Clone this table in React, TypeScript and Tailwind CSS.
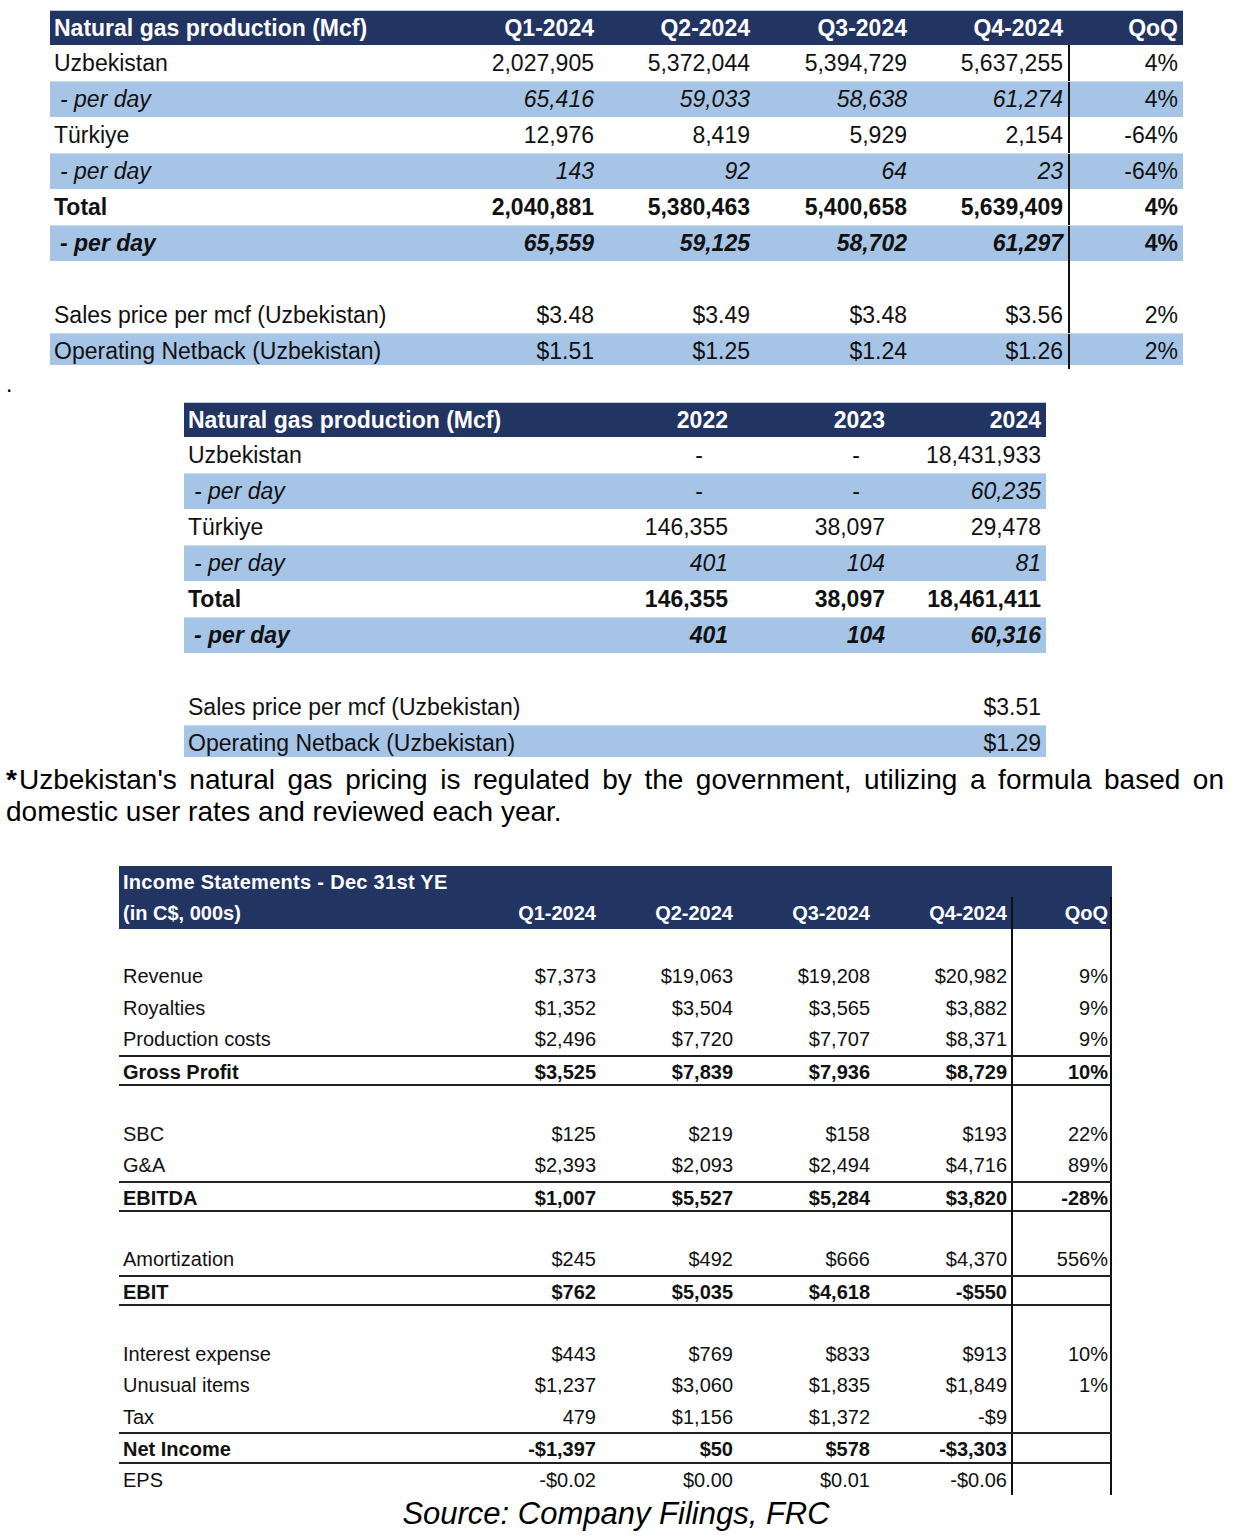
import React from "react";

const FONT = "font-['Liberation_Sans',Arial,Helvetica,sans-serif]";

type Kind = "n" | "i" | "b" | "bi";
type Row = {
  label?: string;
  vals?: string[];
  q?: string;
  blue?: boolean;
  kind?: Kind;
  h: string;
  indent?: boolean;
};

function kindCls(k: Kind | undefined) {
  if (k === "i") return "italic";
  if (k === "b") return "font-bold";
  if (k === "bi") return "font-bold italic";
  return "";
}

function Table1() {
  const rows: Row[] = [
    { label: "Uzbekistan", vals: ["2,027,905", "5,372,044", "5,394,729", "5,637,255"], q: "4%", h: "h-[36px]" },
    { label: "- per day", vals: ["65,416", "59,033", "58,638", "61,274"], q: "4%", blue: true, kind: "i", indent: true, h: "h-[36px]" },
    { label: "Türkiye", vals: ["12,976", "8,419", "5,929", "2,154"], q: "-64%", h: "h-[36px]" },
    { label: "- per day", vals: ["143", "92", "64", "23"], q: "-64%", blue: true, kind: "i", indent: true, h: "h-[36px]" },
    { label: "Total", vals: ["2,040,881", "5,380,463", "5,400,658", "5,639,409"], q: "4%", kind: "b", h: "h-[36px]" },
    { label: "- per day", vals: ["65,559", "59,125", "58,702", "61,297"], q: "4%", blue: true, kind: "bi", indent: true, h: "h-[36px]" },
    { h: "h-[36px]" },
    { label: "Sales price per mcf (Uzbekistan)", vals: ["$3.48", "$3.49", "$3.48", "$3.56"], q: "2%", h: "h-[36px]" },
    { label: "Operating Netback (Uzbekistan)", vals: ["$1.51", "$1.25", "$1.24", "$1.26"], q: "2%", blue: true, h: "h-[32px]" },
  ];
  return (
    <div className="ml-[50px] w-[1133px] text-[23px] text-[#111]">
      <div className="grid h-[35px] grid-cols-[392px_157px_156px_157px_156px_115px] items-center border-t border-[#b9c8df] bg-[#223462] font-bold text-white">
        <div className="pl-[4px]">Natural gas production (Mcf)</div>
        <div className="pr-[5px] text-right">Q1-2024</div>
        <div className="pr-[5px] text-right">Q2-2024</div>
        <div className="pr-[5px] text-right">Q3-2024</div>
        <div className="pr-[5px] text-right">Q4-2024</div>
        <div className="pr-[5px] text-right">QoQ</div>
      </div>
      {rows.map((r, i) => (
        <div
          key={i}
          className={`grid grid-cols-[392px_157px_156px_157px_156px_115px] ${r.h} ${
            r.blue ? "border-t border-[#c9d9ee] bg-[#a6c4e6]" : "bg-white"
          }`}
        >
          <div className={`flex items-center ${r.indent ? "pl-[10px]" : "pl-[4px]"} ${kindCls(r.kind)}`}>{r.label}</div>
          {[0, 1, 2, 3].map((c) => (
            <div key={c} className={`flex items-center justify-end pr-[5px] ${kindCls(r.kind)}`}>
              {r.vals ? r.vals[c] : ""}
            </div>
          ))}
          <div
            className={`flex items-center justify-end border-l-2 border-[#111] pr-[5px] ${
              r.kind === "b" || r.kind === "bi" ? "font-bold" : ""
            }`}
          >
            {r.q}
          </div>
        </div>
      ))}
    </div>
  );
}

function Table2() {
  const rows: Row[] = [
    { label: "Uzbekistan", vals: ["-", "-", "18,431,933"], h: "h-[36px]" },
    { label: "- per day", vals: ["-", "-", "60,235"], blue: true, kind: "i", indent: true, h: "h-[36px]" },
    { label: "Türkiye", vals: ["146,355", "38,097", "29,478"], h: "h-[36px]" },
    { label: "- per day", vals: ["401", "104", "81"], blue: true, kind: "i", indent: true, h: "h-[36px]" },
    { label: "Total", vals: ["146,355", "38,097", "18,461,411"], kind: "b", h: "h-[36px]" },
    { label: "- per day", vals: ["401", "104", "60,316"], blue: true, kind: "bi", indent: true, h: "h-[36px]" },
    { h: "h-[36px]" },
    { label: "Sales price per mcf (Uzbekistan)", vals: ["", "", "$3.51"], h: "h-[36px]" },
    { label: "Operating Netback (Uzbekistan)", vals: ["", "", "$1.29"], blue: true, h: "h-[32px]" },
  ];
  return (
    <div className="ml-[184px] w-[862px] text-[23px] text-[#111]">
      <div className="grid h-[35px] grid-cols-[391px_157px_157px_157px] items-center border-t border-[#b9c8df] bg-[#223462] font-bold text-white">
        <div className="pl-[4px]">Natural gas production (Mcf)</div>
        <div className="pr-[4px] text-right">2022</div>
        <div className="pr-[4px] text-right">2023</div>
        <div className="pr-[5px] text-right">2024</div>
      </div>
      {rows.map((r, i) => (
        <div
          key={i}
          className={`grid grid-cols-[391px_157px_157px_157px] ${r.h} ${
            r.blue ? "border-t border-[#c9d9ee] bg-[#a6c4e6]" : "bg-white"
          }`}
        >
          <div className={`flex items-center ${r.indent ? "pl-[10px]" : "pl-[4px]"} ${kindCls(r.kind)}`}>{r.label}</div>
          {[0, 1, 2].map((c) => {
            const v = r.vals ? r.vals[c] : "";
            const dash = v === "-";
            return (
              <div
                key={c}
                className={`flex items-center justify-end ${dash ? "pr-[29px]" : c === 2 ? "pr-[5px]" : "pr-[4px]"} ${
                  dash ? "" : kindCls(r.kind)
                }`}
              >
                {v}
              </div>
            );
          })}
        </div>
      ))}
    </div>
  );
}

type R3 = { label?: string; vals?: string[]; q?: string; bold?: boolean; h: string };

function Table3() {
  const rows: R3[] = [
    { h: "h-[31px]" },
    { label: "Revenue", vals: ["$7,373", "$19,063", "$19,208", "$20,982"], q: "9%", h: "h-[32px]" },
    { label: "Royalties", vals: ["$1,352", "$3,504", "$3,565", "$3,882"], q: "9%", h: "h-[31px]" },
    { label: "Production costs", vals: ["$2,496", "$7,720", "$7,707", "$8,371"], q: "9%", h: "h-[32px]" },
    { label: "Gross Profit", vals: ["$3,525", "$7,839", "$7,936", "$8,729"], q: "10%", bold: true, h: "h-[31px]" },
    { h: "h-[32px]" },
    { label: "SBC", vals: ["$125", "$219", "$158", "$193"], q: "22%", h: "h-[31px]" },
    { label: "G&A", vals: ["$2,393", "$2,093", "$2,494", "$4,716"], q: "89%", h: "h-[32px]" },
    { label: "EBITDA", vals: ["$1,007", "$5,527", "$5,284", "$3,820"], q: "-28%", bold: true, h: "h-[31px]" },
    { h: "h-[31px]" },
    { label: "Amortization", vals: ["$245", "$492", "$666", "$4,370"], q: "556%", h: "h-[32px]" },
    { label: "EBIT", vals: ["$762", "$5,035", "$4,618", "-$550"], q: "", bold: true, h: "h-[31px]" },
    { h: "h-[32px]" },
    { label: "Interest expense", vals: ["$443", "$769", "$833", "$913"], q: "10%", h: "h-[31px]" },
    { label: "Unusual items", vals: ["$1,237", "$3,060", "$1,835", "$1,849"], q: "1%", h: "h-[32px]" },
    { label: "Tax", vals: ["479", "$1,156", "$1,372", "-$9"], q: "", h: "h-[31px]" },
    { label: "Net Income", vals: ["-$1,397", "$50", "$578", "-$3,303"], q: "", bold: true, h: "h-[32px]" },
    { label: "EPS", vals: ["-$0.02", "$0.00", "$0.01", "-$0.06"], q: "", h: "h-[31px]" },
  ];
  return (
    <div className="ml-[119px] w-[993px] text-[20px] text-[#111]">
      <div className="bg-[#223462] font-bold text-white">
        <div className="flex h-[31px] items-center pl-[4px] tracking-[0.3px]">Income Statements - Dec 31st YE</div>
        <div className="grid h-[32px] grid-cols-[344px_137px_137px_137px_137px_101px]">
          <div className="flex items-center pl-[4px]">(in C$, 000s)</div>
          <div className="flex items-center justify-end pr-[4px]">Q1-2024</div>
          <div className="flex items-center justify-end pr-[4px]">Q2-2024</div>
          <div className="flex items-center justify-end pr-[4px]">Q3-2024</div>
          <div className="flex items-center justify-end pr-[4px]">Q4-2024</div>
          <div className="flex items-center justify-end border-x-2 border-[#111] pr-[2px]">QoQ</div>
        </div>
      </div>
      {rows.map((r, i) => (
        <div
          key={i}
          className={`grid grid-cols-[344px_137px_137px_137px_137px_101px] ${r.h} ${
            r.bold ? "border-y-2 border-[#222] font-bold" : ""
          }`}
        >
          <div className="flex items-center pl-[4px]">{r.label}</div>
          {[0, 1, 2, 3].map((c) => (
            <div key={c} className="flex items-center justify-end pr-[4px]">
              {r.vals ? r.vals[c] : ""}
            </div>
          ))}
          <div className="flex items-center justify-end border-x-2 border-[#111] pr-[2px]">{r.q}</div>
        </div>
      ))}
    </div>
  );
}

export default function App() {
  return (
    <div className={`relative min-h-[1536px] w-[1242px] bg-white pt-[10px] ${FONT}`}>
      <Table1 />
      <div className="h-[37px] pl-[6px] pt-[8px] text-[23px] leading-[23px] text-black">.</div>
      <Table2 />
      <p className="mt-[7px] w-[1224px] pl-[6px] text-justify text-[28px] leading-[32px] text-black">
        <span className="mr-[2px] font-bold">*</span>
        <span>Uzbekistan's natural gas pricing is regulated by the government, utilizing a formula based on</span>{" "}
        <span>domestic user rates and reviewed each year.</span>
      </p>
      <div className="h-[38px]" />
      <Table3 />
      <div className="pr-[10px] pt-[2px] text-center text-[31px] italic leading-[34px] text-black">
        Source: Company Filings, FRC
      </div>
    </div>
  );
}
